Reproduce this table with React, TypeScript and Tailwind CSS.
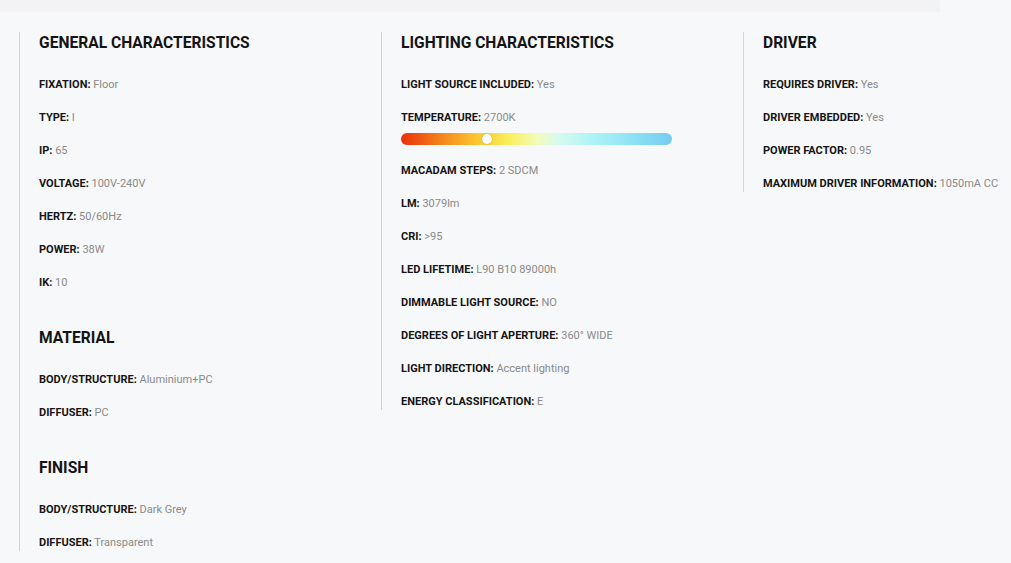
import React from "react";

type Spec = { label: string; value: string; temperature?: boolean };
type Section = { title: string; items: Spec[] };

const columns: Section[][] = [
  [
    {
      title: "GENERAL CHARACTERISTICS",
      items: [
        { label: "FIXATION", value: "Floor" },
        { label: "TYPE", value: "I" },
        { label: "IP", value: "65" },
        { label: "VOLTAGE", value: "100V-240V" },
        { label: "HERTZ", value: "50/60Hz" },
        { label: "POWER", value: "38W" },
        { label: "IK", value: "10" }
      ]
    },
    {
      title: "MATERIAL",
      items: [
        { label: "BODY/STRUCTURE", value: "Aluminium+PC" },
        { label: "DIFFUSER", value: "PC" }
      ]
    },
    {
      title: "FINISH",
      items: [
        { label: "BODY/STRUCTURE", value: "Dark Grey" },
        { label: "DIFFUSER", value: "Transparent" }
      ]
    }
  ],
  [
    {
      title: "LIGHTING CHARACTERISTICS",
      items: [
        { label: "LIGHT SOURCE INCLUDED", value: "Yes" },
        { label: "TEMPERATURE", value: "2700K", temperature: true },
        { label: "MACADAM STEPS", value: "2 SDCM" },
        { label: "LM", value: "3079lm" },
        { label: "CRI", value: ">95" },
        { label: "LED LIFETIME", value: "L90 B10 89000h" },
        { label: "DIMMABLE LIGHT SOURCE", value: "NO" },
        { label: "DEGREES OF LIGHT APERTURE", value: "360° WIDE" },
        { label: "LIGHT DIRECTION", value: "Accent lighting" },
        { label: "ENERGY CLASSIFICATION", value: "E" }
      ]
    }
  ],
  [
    {
      title: "DRIVER",
      items: [
        { label: "REQUIRES DRIVER", value: "Yes" },
        { label: "DRIVER EMBEDDED", value: "Yes" },
        { label: "POWER FACTOR", value: "0.95" },
        { label: "MAXIMUM DRIVER INFORMATION", value: "1050mA CC" }
      ]
    }
  ]
];

function TemperatureBar() {
  return (
    <div className="relative mb-[1px] mt-[7px] h-3 w-[271px] rounded-full bg-[linear-gradient(to_right,#e8300a_0%,#f58a1c_16%,#fbc72f_28%,#f9ef5c_40%,#f3fbb8_50%,#d6fbef_58%,#b0f4f6_70%,#8fe2f4_85%,#74ccf0_100%)]">
      <div className="absolute left-[81px] top-[1px] h-[10px] w-[10px] rounded-full bg-white shadow-[0_0_2px_rgba(0,0,0,0.25)]" />
    </div>
  );
}

function SpecSection({ section }: { section: Section }) {
  return (
    <div>
      <h3 className="text-[15.6px] font-bold leading-[22px] text-[#141414]">{section.title}</h3>
      <ul className="mt-[23px] flex flex-col gap-[17px]">
        {section.items.map((item) => (
          <li key={item.label + item.value}>
            <p className="whitespace-nowrap text-[11px] leading-4">
              <span className="font-bold text-[#141414]">{item.label}:</span>{" "}
              <span className="text-[#8a8a8a]">{item.value}</span>
            </p>
            {item.temperature && <TemperatureBar />}
          </li>
        ))}
      </ul>
    </div>
  );
}

export default function App() {
  return (
    <div className="h-[563px] w-[1011px] overflow-hidden bg-[#f7f8fa] font-['Roboto',sans-serif]">
      <div className="h-3 w-[940px] bg-[#f3f3f5]" />
      <div className="ml-[19px] mt-5 flex items-start">
        {columns.map((sections, i) => (
          <div key={i} className="flex w-[362px] shrink-0 flex-col gap-9 border-l border-[#d2d2d5] pl-[19px]">
            {sections.map((section) => (
              <SpecSection key={section.title} section={section} />
            ))}
          </div>
        ))}
      </div>
    </div>
  );
}
